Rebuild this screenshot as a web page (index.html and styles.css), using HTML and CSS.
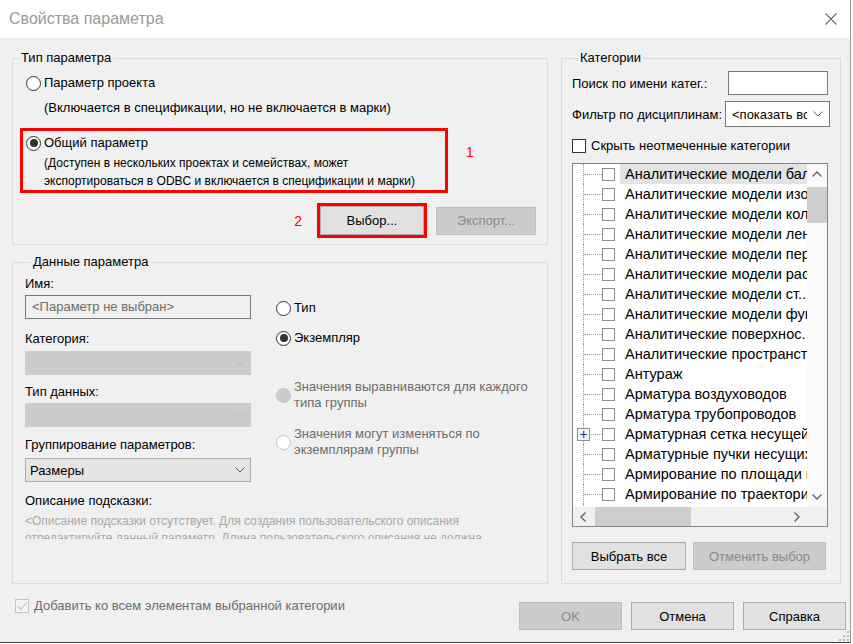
FILE: index.html
```html
<!DOCTYPE html>
<html lang="ru">
<head>
    <meta charset="UTF-8">
    <title>Свойства параметра</title>
    <link rel="stylesheet" href="styles.css">
</head>
<body>
    <div class="dialog">
        <!-- Заголовок окна -->
        <div class="titlebar">
            <span class="title">Свойства параметра</span>
            <svg class="close" width="12" height="12" viewBox="0 0 12 12">
                <path d="M0.5 0.5 L11.5 11.5 M11.5 0.5 L0.5 11.5" stroke="#6a6a6a" stroke-width="1.1" fill="none"/>
            </svg>
        </div>

        <div class="content">
            <div class="columns">
                <div class="left-col">
                    <!-- Тип параметра -->
                    <fieldset class="group group-type">
                        <legend>Тип параметра</legend>
                        <div class="radio-row first-radio"><span class="radio"></span>Параметр проекта</div>
                        <div class="hint">(Включается в спецификации, но не включается в марки)</div>

                        <div class="shared-row">
                            <div class="mark mark-shared">
                                <div class="radio-row"><span class="radio checked"></span>Общий параметр</div>
                                <div class="hint hint-shared">(Доступен в нескольких проектах и семействах, может<br>экспортироваться в ODBC и включается в спецификации и марки)</div>
                            </div>
                            <span class="mark-num num-1">1</span>
                        </div>

                        <div class="btn-row">
                            <span class="mark-num num-2">2</span>
                            <div class="mark mark-btn">
                                <button class="btn btn-select">Выбор...</button>
                            </div>
                            <button class="btn btn-export disabled">Экспорт...</button>
                        </div>
                    </fieldset>

                    <!-- Данные параметра -->
                    <fieldset class="group group-data">
                        <legend>Данные параметра</legend>
                        <div class="data-grid">
                            <div class="fields">
                                <div class="field-label lbl-name">Имя:</div>
                                <div class="textbox name-box">&lt;Параметр не выбран&gt;</div>

                                <div class="field-label lbl-cat">Категория:</div>
                                <div class="combo combo-disabled combo-cat">
                                    <span></span>
                                    <svg width="10" height="6" viewBox="0 0 10 6"><path d="M0.5 0.5 L5 5 L9.5 0.5" fill="none" stroke="#b8b8b8"/></svg>
                                </div>

                                <div class="field-label lbl-type">Тип данных:</div>
                                <div class="combo combo-disabled combo-type">
                                    <span></span>
                                    <svg width="10" height="6" viewBox="0 0 10 6"><path d="M0.5 0.5 L5 5 L9.5 0.5" fill="none" stroke="#b8b8b8"/></svg>
                                </div>

                                <div class="field-label lbl-group">Группирование параметров:</div>
                                <div class="combo combo-group">
                                    <span>Размеры</span>
                                    <svg width="10" height="6" viewBox="0 0 10 6"><path d="M0.5 0.5 L5 5 L9.5 0.5" fill="none" stroke="#5a5a5a"/></svg>
                                </div>
                            </div>

                            <div class="instance">
                                <div class="radio-row inst-type"><span class="radio"></span>Тип</div>
                                <div class="radio-row inst-exemplar"><span class="radio checked"></span>Экземпляр</div>
                                <div class="radio-row multi muted inst-align"><span class="radio radio-disabled filled"></span><span>Значения выравниваются для каждого<br>типа группы</span></div>
                                <div class="radio-row multi muted inst-vary"><span class="radio radio-disabled"></span><span>Значения могут изменяться по<br>экземплярам группы</span></div>
                            </div>
                        </div>

                        <div class="field-label lbl-desc">Описание подсказки:</div>
                        <div class="desc">&lt;Описание подсказки отсутствует. Для создания пользовательского описания<br>отредактируйте данный параметр. Длина пользовательского описания не должна</div>
                    </fieldset>
                </div>

                <!-- Категории -->
                <fieldset class="group group-cat">
                    <legend>Категории</legend>
                    <div class="cat-row row-search">
                        <span>Поиск по имени катег.:</span>
                        <div class="textbox search-box"></div>
                    </div>
                    <div class="cat-row row-filter">
                        <span>Фильтр по дисциплинам:</span>
                        <div class="combo combo-filter">
                            <span class="combo-text">&lt;показать все&gt;</span>
                            <svg width="10" height="6" viewBox="0 0 10 6"><path d="M0.5 0.5 L5 5 L9.5 0.5" fill="none" stroke="#5a5a5a"/></svg>
                        </div>
                    </div>
                    <div class="check-row"><span class="check"></span>Скрыть неотмеченные категории</div>

                    <div class="tree">
                        <div class="tree-main">
                            <div class="tree-rows">
                                <div class="tree-row"><span class="branch"></span><span class="check small"></span><span class="node selected">Аналитические модели балок</span></div>
                                <div class="tree-row"><span class="branch"></span><span class="check small"></span><span class="node">Аналитические модели изолированных фундаментов</span></div>
                                <div class="tree-row"><span class="branch"></span><span class="check small"></span><span class="node">Аналитические модели колонн</span></div>
                                <div class="tree-row"><span class="branch"></span><span class="check small"></span><span class="node">Аналитические модели ленточных фундаментов</span></div>
                                <div class="tree-row"><span class="branch"></span><span class="check small"></span><span class="node">Аналитические модели перекрытий</span></div>
                                <div class="tree-row"><span class="branch"></span><span class="check small"></span><span class="node">Аналитические модели раскосов</span></div>
                                <div class="tree-row"><span class="branch"></span><span class="check small"></span><span class="node">Аналитические модели ст...</span></div>
                                <div class="tree-row"><span class="branch"></span><span class="check small"></span><span class="node">Аналитические модели фундаментных плит</span></div>
                                <div class="tree-row"><span class="branch"></span><span class="check small"></span><span class="node">Аналитические поверхнос...</span></div>
                                <div class="tree-row"><span class="branch"></span><span class="check small"></span><span class="node">Аналитические пространства</span></div>
                                <div class="tree-row"><span class="branch"></span><span class="check small"></span><span class="node">Антураж</span></div>
                                <div class="tree-row"><span class="branch"></span><span class="check small"></span><span class="node">Арматура воздуховодов</span></div>
                                <div class="tree-row"><span class="branch"></span><span class="check small"></span><span class="node">Арматура трубопроводов</span></div>
                                <div class="tree-row"><span class="branch"><span class="expander">+</span></span><span class="check small"></span><span class="node">Арматурная сетка несущей конструкции</span></div>
                                <div class="tree-row"><span class="branch"></span><span class="check small"></span><span class="node">Арматурные пучки несущих конструкций</span></div>
                                <div class="tree-row"><span class="branch"></span><span class="check small"></span><span class="node">Армирование по площади несущих конструкций</span></div>
                                <div class="tree-row"><span class="branch"></span><span class="check small"></span><span class="node">Армирование по траектории несущих конструкций</span></div>
                                <div class="tree-row"><span class="branch"></span><span class="check small"></span><span class="node">Балочные системы</span></div>
                            </div>
                            <div class="vscroll">
                                <div class="sb-arrow">
                                    <svg width="10" height="6" viewBox="0 0 10 6"><path d="M0.5 5.5 L5 1 L9.5 5.5" fill="none" stroke="#606060" stroke-width="1.3"/></svg>
                                </div>
                                <div class="v-thumb"></div>
                                <div class="sb-space"></div>
                                <div class="sb-arrow">
                                    <svg width="10" height="6" viewBox="0 0 10 6"><path d="M0.5 0.5 L5 5 L9.5 0.5" fill="none" stroke="#606060" stroke-width="1.3"/></svg>
                                </div>
                            </div>
                        </div>
                        <div class="tree-bottom">
                            <div class="hscroll">
                                <div class="sb-arrow h-arrow">
                                    <svg width="6" height="10" viewBox="0 0 6 10"><path d="M5.5 0.5 L1 5 L5.5 9.5" fill="none" stroke="#606060" stroke-width="1.3"/></svg>
                                </div>
                                <div class="h-thumb"></div>
                                <div class="sb-space"></div>
                                <div class="sb-arrow h-arrow">
                                    <svg width="6" height="10" viewBox="0 0 6 10"><path d="M0.5 0.5 L5 5 L0.5 9.5" fill="none" stroke="#606060" stroke-width="1.3"/></svg>
                                </div>
                            </div>
                            <div class="corner"></div>
                        </div>
                    </div>

                    <div class="cat-buttons">
                        <button class="btn btn-all">Выбрать все</button>
                        <button class="btn btn-none disabled">Отменить выбор</button>
                    </div>
                </fieldset>
            </div>

            <!-- Нижняя панель -->
            <div class="footer">
                <div class="check-row add-all muted"><span class="check check-disabled">
                    <svg width="12" height="12" viewBox="0 0 12 12"><path d="M2 6.5 L4.8 9.2 L10.5 2.8" fill="none" stroke="#c4c4c4" stroke-width="1.2"/></svg>
                </span>Добавить ко всем элементам выбранной категории</div>
                <div class="footer-buttons">
                    <button class="btn btn-footer disabled">OK</button>
                    <button class="btn btn-footer">Отмена</button>
                    <button class="btn btn-footer">Справка</button>
                </div>
            </div>
        </div>

        <svg class="grip" width="10" height="10" viewBox="0 0 10 10">
            <rect x="8" y="0" width="2" height="2" fill="#bcbcbc"/>
            <rect x="4" y="4" width="2" height="2" fill="#bcbcbc"/>
            <rect x="8" y="4" width="2" height="2" fill="#bcbcbc"/>
            <rect x="0" y="8" width="2" height="2" fill="#bcbcbc"/>
            <rect x="4" y="8" width="2" height="2" fill="#bcbcbc"/>
            <rect x="8" y="8" width="2" height="2" fill="#bcbcbc"/>
        </svg>
    </div>
</body>
</html>
```

FILE: styles.css
```css
* {
    margin: 0;
    padding: 0;
    box-sizing: border-box;
}

body {
    font-family: "Liberation Sans", Arial, sans-serif;
    font-size: 13px;
    color: #000;
    background: #ffffff;
}

.dialog {
    position: relative;
    width: 851px;
    height: 643px;
    background: #f0f0f0;
    border-right: 1px solid #9a9a9a;
    border-bottom: 1px solid #3c3c3c;
    overflow: hidden;
}

.titlebar {
    height: 38px;
    background: white;
    display: flex;
    justify-content: space-between;
    align-items: center;
    padding: 0 13px 0 9px;
}

.title {
    font-size: 16px;
    color: #9a9a9a;
}

.content {
    padding: 12px 9px 0 12px;
}

.columns {
    display: flex;
    gap: 13px;
    height: 534px;
}

.left-col {
    width: 536px;
    display: flex;
    flex-direction: column;
    gap: 9px;
}

/* группы */
.group {
    border: 1px solid #dcdcdc;
    min-width: 0;
}

.group legend {
    margin-left: 6px;
    padding: 0 2px;
    line-height: 16px;
}

.radio-row {
    display: flex;
    align-items: center;
    line-height: 18px;
}

.radio {
    width: 15px;
    height: 15px;
    border: 1px solid #333;
    border-radius: 50%;
    background: white;
    margin-right: 3px;
    flex-shrink: 0;
    display: flex;
    align-items: center;
    justify-content: center;
}

.radio.checked::after {
    content: "";
    width: 8px;
    height: 8px;
    border-radius: 50%;
    background: #333;
}

.radio-disabled {
    border-color: #c4c4c4;
}

.radio-disabled.filled {
    background: #cccccc;
}

.muted {
    color: #6d6d6d;
}

/* Тип параметра */
.first-radio {
    margin-top: 8px;
    padding-left: 13px;
}

.hint {
    line-height: 18px;
    margin-top: 7px;
    padding-left: 31px;
    white-space: nowrap;
}

.shared-row {
    display: flex;
    align-items: flex-start;
    margin-top: 11px;
    margin-left: 7px;
}

.mark {
    border: 3px solid #ff0000;
}

.mark-shared {
    width: 428px;
    padding: 3px 0 0 3px;
}

.hint-shared {
    margin-top: 2px;
    padding-left: 18px;
    font-size: 12px;
}

.mark-num {
    color: #ff0000;
    font-size: 14px;
    line-height: 16px;
}

.num-1 {
    margin: 16px 0 0 18px;
}

.num-2 {
    margin-right: 15px;
}

.btn-row {
    display: flex;
    justify-content: flex-end;
    align-items: center;
    margin-top: 10px;
    padding: 0 11px 6px 0;
}

.btn {
    font-family: inherit;
    font-size: 13px;
    color: #000;
    background: #e1e1e1;
    border: 1px solid #adadad;
    display: flex;
    align-items: center;
    justify-content: center;
}

.btn.disabled {
    background: #cccccc;
    border-color: #bfbfbf;
    color: #8a8a8a;
}

.btn-select {
    width: 104px;
    height: 29px;
}

.btn-export {
    width: 100px;
    height: 28px;
    margin-left: 9px;
}

/* Данные параметра */
.group-data {
    flex: 1;
    padding-left: 12px;
}

.data-grid {
    display: flex;
    gap: 25px;
}

.fields {
    width: 226px;
}

.field-label {
    line-height: 18px;
}

.lbl-name { margin-top: 5px; }
.lbl-cat { margin-top: 11px; }
.lbl-type { margin-top: 8px; }
.lbl-group { margin-top: 9px; }
.lbl-desc { margin-top: 10px; }

.textbox {
    height: 24px;
    border: 1px solid #7a7a7a;
    background: white;
}

.name-box {
    margin-top: 2px;
    background: #f0f0f0;
    color: #6d6d6d;
    line-height: 22px;
    padding-left: 6px;
}

.combo {
    height: 24px;
    display: flex;
    align-items: center;
    justify-content: space-between;
    padding: 0 5px 0 4px;
    border: 1px solid #adadad;
    background: #e5e5e5;
}

.combo-disabled {
    background: #cccccc;
    border-color: #cccccc;
}

.combo-cat { margin-top: 3px; }
.combo-type { margin-top: 2px; }
.combo-group { margin-top: 4px; }

.instance {
    flex: 1;
}

.inst-type { margin-top: 29px; }
.inst-exemplar { margin-top: 12px; }

.radio-row.multi {
    line-height: 16px;
}

.inst-align { margin-top: 32px; }
.inst-vary { margin-top: 15px; }

.desc {
    margin-top: 3px;
    height: 26px;
    line-height: 17px;
    font-size: 12px;
    color: #a8a8a8;
    white-space: nowrap;
    overflow: hidden;
}

/* Категории */
.group-cat {
    width: 280px;
    padding: 0 12px 13px 10px;
}

.cat-row {
    display: flex;
    align-items: center;
    justify-content: space-between;
}

.row-search {
    margin-top: 5px;
}

.search-box {
    width: 100px;
}

.row-filter {
    margin-top: 6px;
    margin-right: -2px;
}

.combo-filter {
    width: 105px;
    height: 26px;
    background: white;
    border-color: #7a7a7a;
    padding: 0 6px 0 6px;
}

.combo-text {
    flex: 1;
    overflow: hidden;
    white-space: nowrap;
    margin-right: 6px;
}

.check-row {
    display: flex;
    align-items: center;
    line-height: 18px;
    margin-top: 10px;
}

.check {
    width: 14px;
    height: 14px;
    border: 1px solid #333;
    background: white;
    margin-right: 5px;
    flex-shrink: 0;
}

/* дерево категорий */
.tree {
    margin-top: 8px;
    height: 364px;
    border: 1px solid #828790;
    background: white;
    display: flex;
    flex-direction: column;
}

.tree-main {
    display: flex;
    height: 343px;
}

.tree-rows {
    width: 234px;
    overflow: hidden;
    font-size: 14.5px;
}

.tree-row {
    height: 20px;
    display: flex;
    align-items: center;
    white-space: nowrap;
}

.branch {
    position: relative;
    width: 19px;
    height: 20px;
    margin-left: 10px;
    border-left: 1px dotted #a0a0a0;
    flex-shrink: 0;
}

.branch::after {
    content: "";
    position: absolute;
    left: 0;
    right: 0;
    top: 10px;
    border-top: 1px dotted #a0a0a0;
}

.expander {
    position: absolute;
    left: -7px;
    top: 4px;
    width: 13px;
    height: 13px;
    border: 1px solid #919191;
    background: #f4f4f4;
    color: #1f3c78;
    font-size: 14px;
    line-height: 10px;
    text-align: center;
    z-index: 1;
}

.check.small {
    width: 13px;
    height: 13px;
    border-color: #8c8c8c;
    margin-right: 5px;
}

.node {
    flex: 1;
    padding-left: 5px;
    line-height: 20px;
}

.node.selected {
    background: #e3e3e3;
}

.vscroll {
    width: 20px;
    background: #fafafa;
    display: flex;
    flex-direction: column;
}

.sb-arrow {
    height: 20px;
    display: flex;
    align-items: center;
    justify-content: center;
    flex-shrink: 0;
}

.v-thumb {
    height: 36px;
    margin-top: 3px;
    background: #cdcdcd;
}

.sb-space {
    flex: 1;
}

.tree-bottom {
    display: flex;
    flex: 1;
}

.hscroll {
    width: 234px;
    display: flex;
    background: #f0f0f0;
}

.h-arrow {
    width: 20px;
    height: auto;
}

.h-thumb {
    width: 96px;
    margin-left: 2px;
    background: #cdcdcd;
}

.corner {
    flex: 1;
    background: #f0f0f0;
}

.cat-buttons {
    display: flex;
    gap: 7px;
    margin-top: 15px;
}

.btn-all {
    width: 114px;
    height: 28px;
}

.btn-none {
    width: 133px;
    height: 28px;
}

/* нижняя панель */
.footer {
    display: flex;
    justify-content: space-between;
    align-items: flex-start;
    margin-right: -5px;
}

.add-all {
    margin-top: 14px;
    margin-left: 3px;
    line-height: 16px;
}

.check-disabled {
    border-color: #c4c4c4;
    background: #f4f4f4;
    display: flex;
    align-items: center;
    justify-content: center;
    margin-right: 5px;
}

.footer-buttons {
    display: flex;
    gap: 9px;
    margin-top: 18px;
}

.btn-footer {
    width: 103px;
    height: 28px;
}

.grip {
    position: absolute;
    right: 1px;
    bottom: 1px;
}
```
